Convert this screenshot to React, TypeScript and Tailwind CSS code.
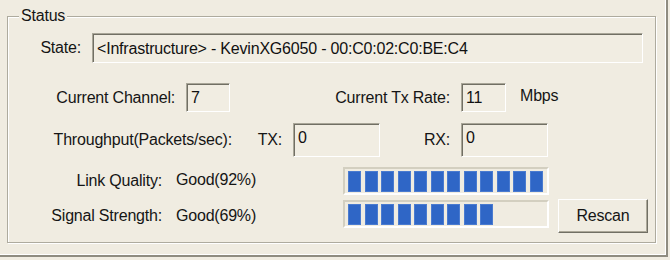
const font = { fontFamily: '"Liberation Sans", Arial, sans-serif' };

function Field({ value, className }: { value: string; className: string }) {
  return (
    <div
      className={`shrink-0 flex items-start pl-[4px] pt-[2px] border border-t-[#a9a698] border-l-[#a9a698] border-r-white border-b-white shadow-[inset_1px_1px_0_#716f64] bg-[#f1ede2] text-[#111] ${className}`}
    >
      {value}
    </div>
  );
}

function Bar({ filled }: { filled: number }) {
  return (
    <div className="shrink-0 w-[206px] h-[28px] flex items-center gap-[3.5px] pl-[3px] border-2 border-t-[#d3cfc0] border-l-[#d3cfc0] border-r-white border-b-white bg-[#f0ece1]">
      {Array.from({ length: filled }).map((_, i) => (
        <div key={i} className="w-[13px] h-[21px] bg-[#2f66c6] shadow-[inset_0_0_0_1px_#4a7bd0]" />
      ))}
    </div>
  );
}

export default function App() {
  return (
    <div className="w-[670px] h-[260px] bg-[#f0ece1] text-[16px] tracking-[-0.2px] text-[#151515]" style={font}>
      <div className="w-[668px] h-[257px] border-r-2 border-b-2 border-[#8f8c80] shadow-[inset_-1px_-1px_0_#fff] pt-[16px] pl-[7px]">
        <div className="relative w-[649px] h-[227px] border border-[#aeab9e] shadow-[1px_1px_0_#fff,inset_1px_1px_0_#fff]">
          <span className="absolute -top-[11px] left-[11px] px-[2px] bg-[#f0ece1] leading-[20px]">Status</span>

          {/* State */}
          <div className="flex items-center mt-[16px] h-[30px]">
            <span className="w-[73px] text-right shrink-0">State:</span>
            <Field value="<Infrastructure> - KevinXG6050 - 00:C0:02:C0:BE:C4" className="ml-[11px] w-[551px] h-[30px] pt-[3px]" />
          </div>

          {/* Channel / Tx rate */}
          <div className="flex items-center mt-[20px] h-[29px]">
            <span className="w-[167px] text-right shrink-0">Current Channel:</span>
            <Field value="7" className="ml-[11px] w-[44px] h-[29px]" />
            <span className="w-[220px] text-right shrink-0">Current Tx Rate:</span>
            <Field value="11" className="ml-[11px] w-[45px] h-[29px]" />
            <span className="ml-[14px] -mt-[4px]">Mbps</span>
          </div>

          {/* Throughput */}
          <div className="flex items-center mt-[11px] h-[34px]">
            <span className="w-[224px] text-right shrink-0">Throughput(Packets/sec):</span>
            <span className="w-[50px] text-right shrink-0">TX:</span>
            <Field value="0" className="ml-[11px] w-[87px] h-[34px]" />
            <span className="w-[70px] text-right shrink-0">RX:</span>
            <Field value="0" className="ml-[11px] w-[87px] h-[34px]" />
          </div>

          {/* Link quality */}
          <div className="flex items-center mt-[10px] h-[28px]">
            <span className="w-[154px] text-right shrink-0">Link Quality:</span>
            <span className="ml-[14px] w-[167px] shrink-0 -mt-[3px]">Good(92%)</span>
            <Bar filled={12} />
          </div>

          {/* Signal strength */}
          <div className="flex items-center mt-[4px] h-[34px]">
            <span className="w-[154px] text-right shrink-0">Signal Strength:</span>
            <span className="ml-[14px] w-[167px] shrink-0">Good(69%)</span>
            <div className="self-start mt-[1px]">
              <Bar filled={9} />
            </div>
            <button className="ml-[9px] w-[90px] h-[34px] flex items-center justify-center border border-t-white border-l-white border-r-[#716f64] border-b-[#716f64] shadow-[inset_-1px_-1px_0_#aca899] bg-[#f0ece1]">
              Rescan
            </button>
          </div>
        </div>
      </div>
    </div>
  );
}
